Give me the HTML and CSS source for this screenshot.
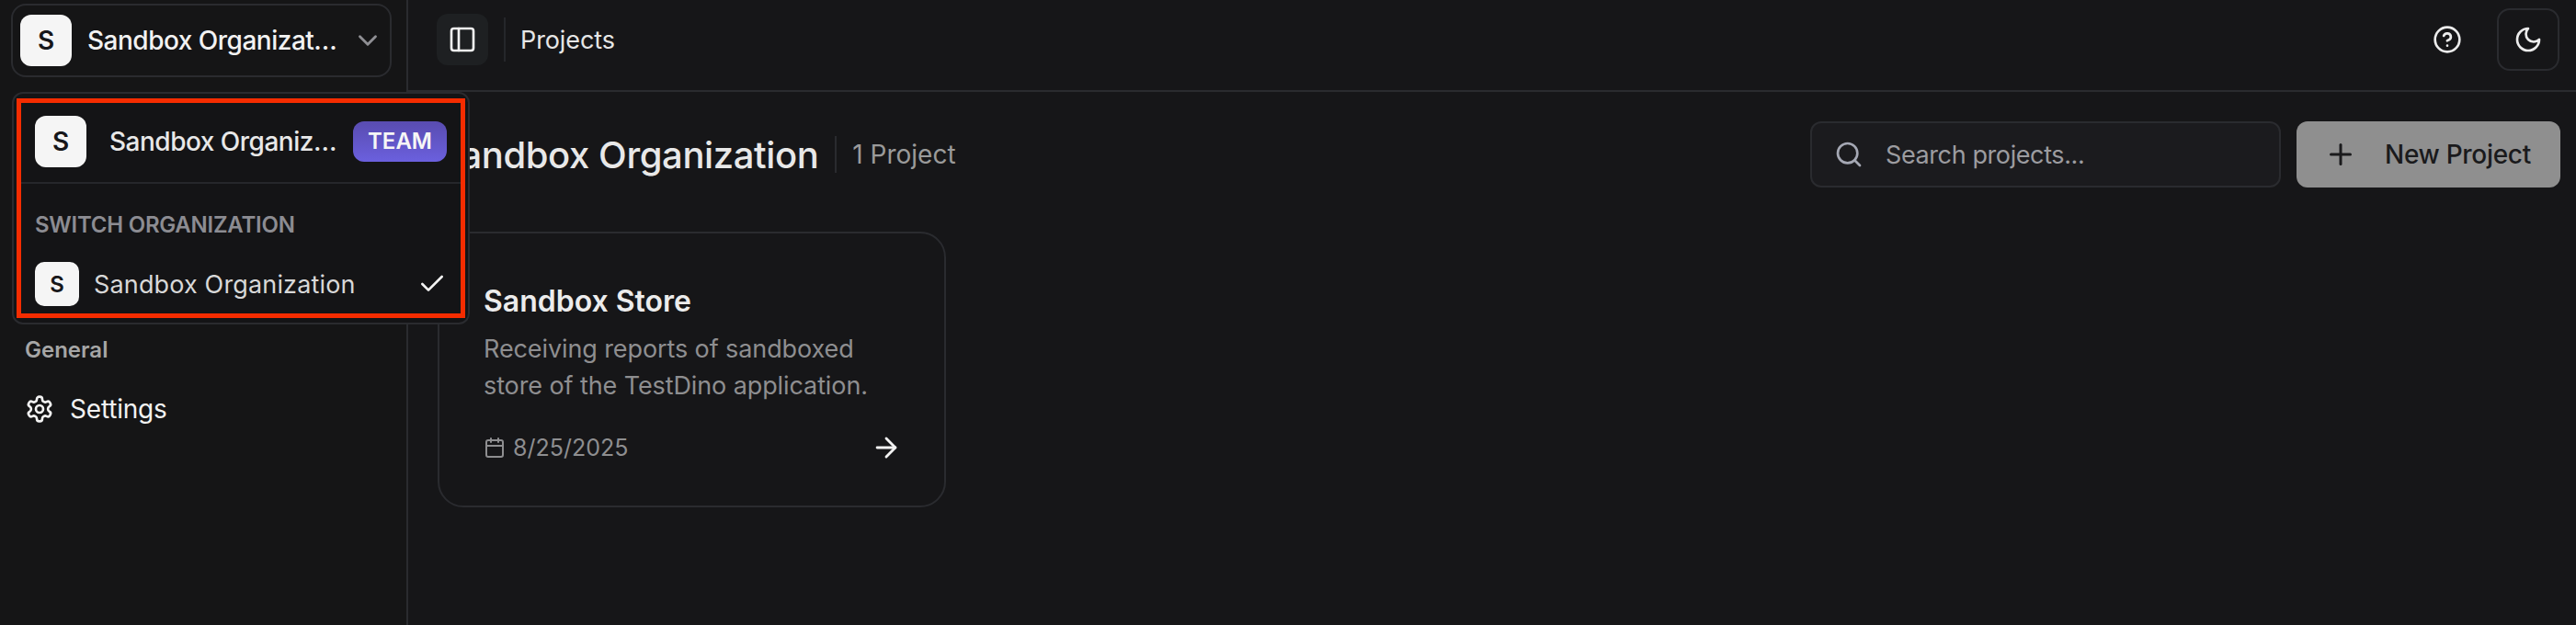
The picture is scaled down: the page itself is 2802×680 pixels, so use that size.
FILE: index.html
```html
<!DOCTYPE html>
<html lang="en">
  <head>
    <meta charset="UTF-8" />
    <meta name="viewport" content="width=device-width, initial-scale=1.0" />
    <title>Projects</title>
    <link rel="stylesheet" href="styles.css">
  </head>
  <body>
    <div class="app">
      <aside class="sidebar">
        <button class="org-switcher">
          <span class="avatar">S</span>
          <span class="org-name">Sandbox Organization</span>
          <svg class="icon chevron" viewBox="0 0 24 24"><path d="m6 9 6 6 6-6" /></svg>
        </button>
        <div class="nav-section">
          <div class="nav-label">General</div>
          <a class="nav-item">
            <svg class="icon" viewBox="0 0 24 24"><path d="M12.22 2h-.44a2 2 0 0 0-2 2v.18a2 2 0 0 1-1 1.73l-.43.25a2 2 0 0 1-2 0l-.15-.08a2 2 0 0 0-2.73.73l-.22.38a2 2 0 0 0 .73 2.73l.15.1a2 2 0 0 1 1 1.72v.51a2 2 0 0 1-1 1.74l-.15.09a2 2 0 0 0-.73 2.73l.22.38a2 2 0 0 0 2.73.73l.15-.08a2 2 0 0 1 2 0l.43.25a2 2 0 0 1 1 1.73V20a2 2 0 0 0 2 2h.44a2 2 0 0 0 2-2v-.18a2 2 0 0 1 1-1.73l.43-.25a2 2 0 0 1 2 0l.15.08a2 2 0 0 0 2.73-.73l.22-.39a2 2 0 0 0-.73-2.73l-.15-.08a2 2 0 0 1-1-1.74v-.5a2 2 0 0 1 1-1.74l.15-.09a2 2 0 0 0 .73-2.73l-.22-.38a2 2 0 0 0-2.73-.73l-.15.08a2 2 0 0 1-2 0l-.43-.25a2 2 0 0 1-1-1.73V4a2 2 0 0 0-2-2z" /><circle cx="12" cy="12" r="3" /></svg>
            <span>Settings</span>
          </a>
        </div>
      </aside>

      <div class="main">
        <header class="topbar">
          <button class="panel-toggle">
            <svg class="icon" viewBox="0 0 24 24"><rect x="3" y="3" width="18" height="18" rx="2" /><path d="M9 3v18" /></svg>
          </button>
          <div class="topbar-divider"></div>
          <span class="crumb">Projects</span>
          <div class="topbar-actions">
            <button class="help-button">
              <svg class="icon" viewBox="0 0 24 24"><circle cx="12" cy="12" r="10" /><path d="M9.09 9a3 3 0 0 1 5.83 1c0 2-3 3-3 3" /><path d="M12 17h.01" /></svg>
            </button>
            <button class="theme-button">
              <svg class="icon" viewBox="0 0 24 24"><path d="M12 3a6 6 0 0 0 9 9 9 9 0 1 1-9-9Z" /></svg>
            </button>
          </div>
        </header>

        <main class="content">
          <div class="page-header">
            <h1>Sandbox Organization</h1>
            <span class="count">1 Project</span>
            <div class="page-actions">
              <label class="search">
                <svg class="icon" viewBox="0 0 24 24"><circle cx="11" cy="11" r="8" /><path d="m21 21-4.3-4.3" /></svg>
                <span>Search projects...</span>
              </label>
              <button class="new-project">
                <svg class="icon" viewBox="0 0 24 24"><path d="M5 12h14" /><path d="M12 5v14" /></svg>
                <span>New Project</span>
              </button>
            </div>
          </div>

          <div class="project-card">
            <h2>Sandbox Store</h2>
            <p>Receiving reports of sandboxed store of the TestDino application.</p>
            <div class="card-footer">
              <span class="card-date">
                <svg class="icon" viewBox="0 0 24 24"><path d="M8 2v4" /><path d="M16 2v4" /><rect x="3" y="4" width="18" height="18" rx="2" /><path d="M3 10h18" /></svg>
                8/25/2025
              </span>
              <svg class="icon arrow" viewBox="0 0 24 24"><path d="M5 12h14" /><path d="m12 5 7 7-7 7" /></svg>
            </div>
          </div>
        </main>
      </div>

      <div class="org-menu">
        <div class="org-menu-frame">
          <div class="org-current">
            <span class="avatar">S</span>
            <span class="org-current-name">Sandbox Organization</span>
            <span class="plan-badge">TEAM</span>
          </div>
          <div class="org-list">
            <div class="org-list-label">SWITCH ORGANIZATION</div>
            <div class="org-option">
              <span class="avatar small">S</span>
              <span class="org-option-name">Sandbox Organization</span>
              <svg class="icon check" viewBox="0 0 24 24"><path d="M20 6 9 17l-5-5" /></svg>
            </div>
          </div>
        </div>
      </div>
    </div>
  </body>
</html>
```
FILE: styles.css
```css
* {
  box-sizing: border-box;
}

body {
  margin: 0;
  background: #161618;
  color: #f2f2f2;
  font-family: Inter, "Noto Sans", sans-serif;
  overflow: hidden;
}

button {
  font-family: inherit;
  color: inherit;
  background: none;
  border: none;
  padding: 0;
}

.icon {
  fill: none;
  stroke: currentColor;
  stroke-width: 2;
  stroke-linecap: round;
  stroke-linejoin: round;
  flex-shrink: 0;
}

.app {
  position: relative;
  display: flex;
  height: 680px;
}

.sidebar {
  width: 444px;
  flex-shrink: 0;
  border-right: 2px solid #2a2b2f;
  background: #151516;
  padding: 4px 16px 0 12px;
}

.org-switcher {
  display: flex;
  align-items: center;
  width: 100%;
  height: 80px;
  padding: 0 7px 0 8px;
  border: 2px solid #2a2b2f;
  border-radius: 16px;
}

.avatar {
  display: flex;
  align-items: center;
  justify-content: center;
  width: 56px;
  height: 56px;
  flex-shrink: 0;
  border-radius: 12px;
  background: #f5f5f5;
  color: #17171a;
  font-size: 28px;
  font-weight: 600;
}

.avatar.small {
  width: 48px;
  height: 48px;
  border-radius: 10px;
  font-size: 24px;
}

.org-name {
  flex: 1;
  min-width: 0;
  margin: 0 16px 0 17px;
  font-size: 28px;
  font-weight: 500;
  letter-spacing: -0.5px;
  text-align: left;
  white-space: nowrap;
  overflow: hidden;
  text-overflow: ellipsis;
}

.chevron {
  width: 34px;
  height: 34px;
  color: #8f8f94;
}

.nav-section {
  padding: 281px 0 0 15px;
}

.nav-label {
  font-size: 24px;
  font-weight: 600;
  line-height: 32px;
  color: #a6a6a6;
}

.nav-item {
  display: flex;
  align-items: center;
  gap: 17px;
  margin-top: 28px;
  font-size: 28px;
  letter-spacing: -0.2px;
  line-height: 40px;
  color: #f2f2f2;
}

.nav-item .icon {
  width: 32px;
  height: 32px;
}

.main {
  flex: 1;
  min-width: 0;
  display: flex;
  flex-direction: column;
}

.topbar {
  display: flex;
  align-items: center;
  height: 100px;
  padding: 0 18px 12px 31px;
  border-bottom: 2px solid #2a2b2f;
}

.panel-toggle {
  display: flex;
  align-items: center;
  justify-content: center;
  width: 56px;
  height: 56px;
  border-radius: 12px;
  background: #1e2022;
}

.panel-toggle .icon {
  width: 32px;
  height: 32px;
}

.topbar-divider {
  width: 2px;
  height: 48px;
  margin: 0 16px 0 17px;
  background: #25262a;
}

.crumb {
  font-size: 27px;
  letter-spacing: -0.1px;
  color: #e6e6e6;
}

.topbar-actions {
  margin-left: auto;
  display: flex;
  align-items: center;
  gap: 38px;
}

.help-button {
  display: flex;
}

.help-button .icon {
  width: 32px;
  height: 32px;
  color: #ececec;
}

.theme-button {
  display: flex;
  align-items: center;
  justify-content: center;
  width: 68px;
  height: 68px;
  border: 2px solid #2a2b2f;
  border-radius: 14px;
}

.theme-button .icon {
  width: 32px;
  height: 32px;
  color: #ececec;
}

.content {
  padding: 32px 17px 0 32px;
}

.page-header {
  display: flex;
  align-items: center;
  height: 72px;
}

.page-header h1 {
  margin: 0;
  font-size: 40px;
  font-weight: 500;
  letter-spacing: -0.4px;
  color: #e8e8e8;
}

.count {
  margin-left: 18px;
  padding-left: 17px;
  border-left: 2px solid #2a2b2f;
  font-size: 28px;
  line-height: 40px;
  color: #9a9a9a;
}

.page-actions {
  margin-left: auto;
  display: flex;
  gap: 17px;
}

.search {
  display: flex;
  align-items: center;
  gap: 24px;
  width: 512px;
  height: 72px;
  padding: 0 24px;
  background: #1b1b1e;
  border: 2px solid #2a2b2f;
  border-radius: 12px;
  font-size: 27px;
  letter-spacing: -0.4px;
  color: #9c9ca0;
}

.search .icon {
  width: 32px;
  height: 32px;
  color: #a5a8b4;
}

.new-project {
  display: flex;
  align-items: center;
  gap: 30px;
  width: 287px;
  height: 72px;
  padding: 0 30px;
  background: #8f8f8f;
  border-radius: 12px;
  color: #1a1a1c;
  font-size: 28px;
  font-weight: 500;
  letter-spacing: -0.3px;
  white-space: nowrap;
}

.new-project .icon {
  width: 36px;
  height: 36px;
}

.project-card {
  width: 553px;
  height: 300px;
  margin-top: 48px;
  padding: 50px 46px 0 48px;
  border: 2px solid #2a2b2f;
  border-radius: 28px;
}

.project-card h2 {
  margin: 0;
  font-size: 32px;
  font-weight: 600;
  line-height: 48px;
  color: #ececec;
}

.project-card p {
  margin: 8px 0 0;
  font-size: 27px;
  letter-spacing: -0.1px;
  line-height: 40px;
  color: #8e8e90;
}

.card-footer {
  display: flex;
  align-items: center;
  justify-content: space-between;
  margin-top: 30px;
}

.card-date {
  display: flex;
  align-items: center;
  gap: 8px;
  font-size: 25px;
  color: #8e8e90;
}

.card-date .icon {
  width: 24px;
  height: 24px;
}

.arrow {
  width: 34px;
  height: 34px;
}

.org-menu {
  position: absolute;
  left: 13px;
  top: 100px;
  width: 498px;
  height: 253px;
  padding: 5px 3px;
  background: #141416;
  border: 2px solid #2a2b2f;
  border-radius: 12px;
}

.org-menu-frame {
  height: 100%;
  border: 5px solid #f52c00;
}

.org-current {
  display: flex;
  align-items: center;
  height: 88px;
  padding: 0 15px 2px 15px;
  border-bottom: 2px solid #26272b;
}

.org-current-name {
  flex: 1;
  min-width: 0;
  margin: 0 10px 0 25px;
  font-size: 28px;
  font-weight: 500;
  letter-spacing: -0.5px;
  color: #e8e8e8;
  white-space: nowrap;
  overflow: hidden;
  text-overflow: ellipsis;
}

.plan-badge {
  padding: 0 16px;
  height: 44px;
  line-height: 44px;
  border-radius: 12px;
  background: linear-gradient(180deg, #594cb0, #6b60de);
  font-size: 24px;
  font-weight: 600;
  color: #f6f6f6;
}

.org-list {
  padding: 0 15px;
}

.org-list-label {
  margin-top: 29px;
  font-size: 24px;
  font-weight: 600;
  letter-spacing: -0.25px;
  line-height: 32px;
  color: #8c8c92;
}

.org-option {
  display: flex;
  align-items: center;
  margin-top: 24px;
}

.org-option-name {
  flex: 1;
  margin-left: 16px;
  font-size: 27px;
  letter-spacing: 0.15px;
  color: #d8d8d8;
}

.check {
  width: 32px;
  height: 32px;
  color: #f2f2f2;
}
```
